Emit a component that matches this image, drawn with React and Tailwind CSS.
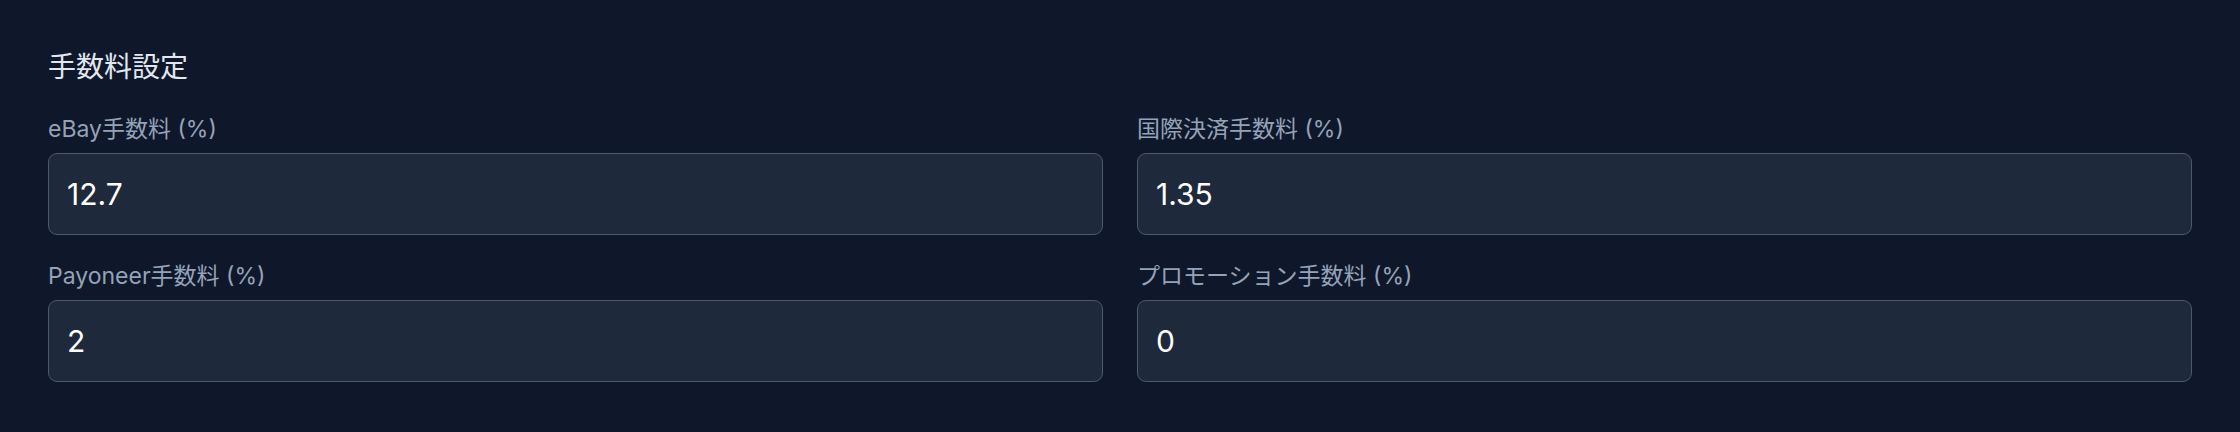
import { useState } from 'react';

const fields = [
  { key: 'ebay', label: 'eBay手数料 (%)', value: '12.7' },
  { key: 'intl', label: '国際決済手数料 (%)', value: '1.35' },
  { key: 'payoneer', label: 'Payoneer手数料 (%)', value: '2' },
  { key: 'promo', label: 'プロモーション手数料 (%)', value: '0' },
];

const App = () => {
  const [values, setValues] = useState(
    Object.fromEntries(fields.map((f) => [f.key, f.value]))
  );

  return (
    <div
      className="min-h-[432px] w-full bg-[#0f172a] px-[48px] pt-[48px]"
      style={{ fontFamily: 'Inter, "Noto Sans CJK JP", sans-serif' }}
    >
      <h2 className="mb-[28px] text-[28px] leading-[39px] text-[#e2e8f0]">手数料設定</h2>
      <div className="grid grid-cols-2 gap-x-[34px] gap-y-[27px]">
        {fields.map((field) => (
          <label key={field.key} className="flex flex-col">
            <span className="mb-[10px] text-[23px] leading-[28px] text-[#94a3b8]">{field.label}</span>
            <input
              type="number"
              className="h-[82px] w-full rounded-[9px] border-[1.5px] border-[#4b5a6e] bg-[#1e293b] px-[18px] text-[30px] text-white outline-none [appearance:textfield]"
              value={values[field.key]}
              onChange={(e) => setValues({ ...values, [field.key]: e.target.value })}
            />
          </label>
        ))}
      </div>
    </div>
  );
};

export default App;
